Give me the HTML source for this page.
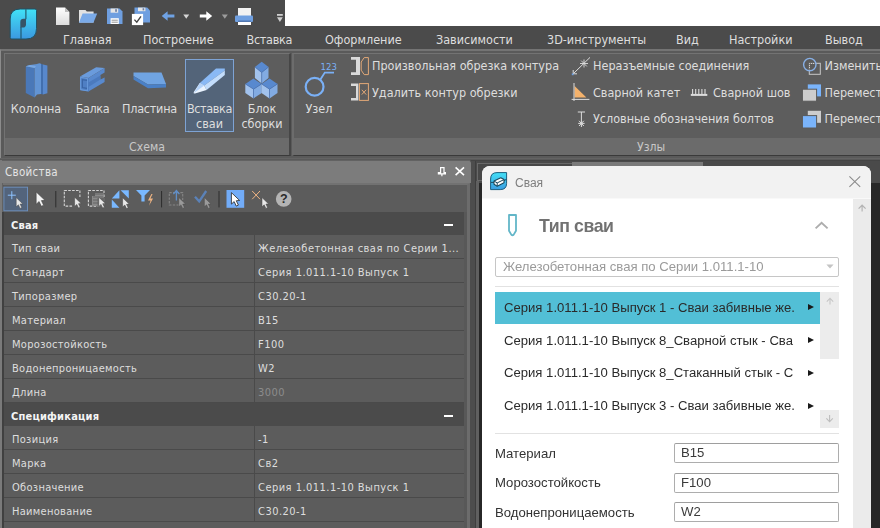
<!DOCTYPE html>
<html lang="ru"><head><meta charset="utf-8"><title>Свая</title>
<style>
*{box-sizing:border-box;margin:0;padding:0}
html,body{width:880px;height:528px;overflow:hidden;background:#4b4b4b}
body{position:relative;font-family:"Liberation Sans","DejaVu Sans",sans-serif}
.abs,svg.i{position:absolute}
svg.i{overflow:visible}
#qat{left:0;top:0;width:285px;height:26px;background:#4b4b4b}
#white{left:285px;top:0;width:595px;height:26px;background:#fff}
#tabs{left:0;top:26px;width:880px;height:24px;background:#4b4b4b}
.tab{position:absolute;top:6px;font:12.5px/16px "DejaVu Sans Condensed","DejaVu Sans",sans-serif;color:#dedede;white-space:nowrap}
#ribbon{left:0;top:49px;width:880px;height:112px;background:#5a5a5a;border-top:2px solid #747474;border-left:1px solid #8c8c8c}
.panel{position:absolute;top:53px;height:103px;background:#5d5d5d;border-top:1px solid #737373;border-bottom:1px solid #3a3a3a}
.ptitle{position:absolute;left:0;right:0;bottom:0;height:17px;background:#6b6b6b;color:#c8c8c8;text-align:center;font:12.2px/18.6px "DejaVu Sans Condensed","DejaVu Sans",sans-serif}
.rt{position:absolute;font:12.5px/16px "DejaVu Sans Condensed","DejaVu Sans",sans-serif;color:#dedede;white-space:nowrap}
.big{margin-top:1px;position:absolute;text-align:center;font:12.5px/15px "DejaVu Sans Condensed","DejaVu Sans",sans-serif;color:#dedede;white-space:nowrap}
#props{left:0;top:160px;width:470px;height:368px;background:#626262;border-left:2px solid #7a7a7a}
#pinner{left:3px;top:183px;width:467px;height:345px;background:#585858;border-top:2px solid #727272;border-right:3px solid #6c6c6c}
#ptitle{left:0;top:161px;width:471px;height:22px;background:#7c7c7c;color:#e4e4e4;font:11.5px/23px "DejaVu Sans Condensed","DejaVu Sans",sans-serif;letter-spacing:.3px;padding-left:5px;border-radius:0 2px 0 0}
.row{position:absolute;left:4px;width:460px;height:24px;background:#5c5c5c;border-bottom:1px solid #4a4a4a;font:11px/22px "DejaVu Sans Condensed","DejaVu Sans",sans-serif;letter-spacing:.3px;color:#dedede}
.row .k{position:absolute;left:8px;top:2.6px;white-space:nowrap}
.row .v{position:absolute;left:254px;top:2.6px;white-space:nowrap;letter-spacing:.47px}
.row.h{height:23px;background:#4b4b4b;font-weight:bold;color:#f4f4f4;border-bottom:none;letter-spacing:.2px}.row.h .k{top:3px;left:7px}
.row.h i{position:absolute;left:440px;top:11.5px;width:9px;height:2px;background:#fff}
.row .vd{position:absolute;left:250px;top:0;width:1px;height:24px;background:#4a4a4a}
#dlg{left:482px;top:166px;width:389px;height:380px;background:#fff;border-radius:8px 8px 0 0;overflow:hidden;will-change:transform}
#dtitle{left:0;top:0;width:390px;height:33px;background:#f2f2f2;border-bottom:1px solid #f9f9f9}
#dscroll{left:370.5px;top:33px;width:20px;height:340px;background:#ebebeb}
.dt{position:absolute;font-family:"Liberation Sans",sans-serif;white-space:nowrap}
.inp{position:absolute;height:20px;border:1px solid #adadad;border-top-color:#9e9e9e;border-radius:2px;background:#fff;font:13.15px/17.4px "Liberation Sans",sans-serif;color:#3a3a3a;padding-left:6px;white-space:nowrap}
.li{position:absolute;left:13px;width:325px;height:32px;font:13.12px/32px "Liberation Sans",sans-serif;color:#2a2a2a;padding-left:9px;white-space:nowrap}
.li b{position:absolute;left:312.6px;top:12.5px;width:0;height:0;border-left:6.6px solid #1a1a1a;border-top:3.6px solid transparent;border-bottom:3.6px solid transparent}
</style></head><body>
<div id="qat" class="abs"></div>
<div id="white" class="abs"></div>
<div id="tabs" class="abs">
<span class="tab" style="left:63px">Главная</span>
<span class="tab" style="left:143px">Построение</span>
<span class="tab" style="left:246.5px;letter-spacing:-.3px">Вставка</span>
<span class="tab" style="left:325px">Оформление</span>
<span class="tab" style="left:436px">Зависимости</span>
<span class="tab" style="left:547px">3D-инструменты</span>
<span class="tab" style="left:676px">Вид</span>
<span class="tab" style="left:729px">Настройки</span>
<span class="tab" style="left:825px">Вывод</span>
</div>
<div id="ribbon" class="abs"></div><div class="abs" style="left:0;top:158px;width:880px;height:3px;background:linear-gradient(#686868,#4a4a4a)"></div>
<div class="panel" style="left:4px;width:287px;border-left:1px solid #737373;border-right:2px solid #464646"><div class="ptitle">Схема</div></div>
<div class="panel" style="left:292px;width:600px;border-left:2px solid #6c6c6c"><div class="ptitle" style="text-align:left;padding-left:343px">Узлы</div></div>
<div class="abs" style="left:185px;top:59px;width:49px;height:73px;background:#536479;border:1px solid #7ea3d4"></div>
<div class="big" style="left:6px;top:100px;width:60px">Колонна</div>
<div class="big" style="left:66.5px;top:100px;width:52px;letter-spacing:-.4px">Балка</div>
<div class="big" style="left:117.5px;top:100px;width:64px;letter-spacing:-.25px">Пластина</div>
<div class="big" style="left:185px;top:100px;width:49px"><span style="letter-spacing:-.35px">Вставка</span><br>сваи</div>
<div class="big" style="left:236px;top:100px;width:52px">Блок<br>сборки</div>
<div class="big" style="left:297px;top:100px;width:44px">Узел</div>
<span class="rt" style="left:372px;top:58px">Произвольная обрезка контура</span>
<span class="rt" style="left:372px;top:84.6px">Удалить контур обрезки</span>
<span class="rt" style="left:593px;top:58px">Неразъемные соединения</span>
<span class="rt" style="left:593px;top:84.6px">Сварной катет</span>
<span class="rt" style="left:713px;top:84.6px">Сварной шов</span>
<span class="rt" style="left:593px;top:111px">Условные обозначения болтов</span>
<span class="rt" style="left:824.5px;top:58px">Изменить</span>
<span class="rt" style="left:824.5px;top:84.6px">Переместить</span>
<span class="rt" style="left:824.5px;top:111px">Переместить</span>
<!--ICONS_START--><svg class="i" style="left:0;top:0" width="880" height="160" viewBox="0 0 880 160">
<defs>
<linearGradient id="lg" x1="0" y1="0" x2="0" y2="1"><stop offset="0" stop-color="#41e2f7"/><stop offset="1" stop-color="#3b98e0"/></linearGradient>
<linearGradient id="pg" x1="0" y1="0" x2="0" y2="1"><stop offset="0" stop-color="#ffffff"/><stop offset="1" stop-color="#dcdcdc"/></linearGradient>
</defs>
<!-- logo -->
<path d="M10.2,37.6 V19 Q10.2,9 20.2,9 H35 Q36.5,9 36.5,10.5 V28.5 Q36.5,39 26,39 H11.7 Q10.2,39 10.2,37.6 Z" fill="url(#lg)" stroke="#1f5266" stroke-width="1"/>
<path d="M25.9,9.2 V19.2 M21,27 V38.8" stroke="#1f5266" stroke-width="1.1" fill="none"/>
<path d="M26,18.8 H23.6 Q20.3,18.8 20.3,22 V27.5 H22.8 Q26,27.5 26,24.4 Z" fill="#365468"/>
<!-- new doc -->
<path d="M56,7.4 H65 L69.4,12 V25 H56 Z" fill="url(#pg)"/>
<path d="M65,7.4 V12 H69.4 Z" fill="#bdbdbd"/>
<!-- folder -->
<path d="M79,10 H85.5 L86.8,11.5 H93.6 V22.5 H79 Z" fill="#e2e2e2"/>
<path d="M82.6,13.6 H97.2 L93.4,22.7 H78.9 Z" fill="#7aaae8"/>
<!-- save -->
<path d="M107,8.5 H119.6 L122.5,11.4 V24 H107 Z" fill="#6f9fe0"/>
<rect x="110.6" y="8.5" width="7.6" height="4.2" fill="#e6e6e6"/><rect x="115.2" y="9.2" width="1.7" height="2.6" fill="#6b7fa5"/>
<rect x="110.6" y="18.2" width="8.2" height="5.8" fill="#fff"/><path d="M111.6,20.2 H117.8 M111.6,22.2 H117.8" stroke="#8a8a8a" stroke-width=".9"/>
<!-- save as -->
<path d="M134.5,7.6 H147.2 L150,10.4 V22.6 H134.5 Z" fill="#6f9fe0"/>
<rect x="138" y="7.6" width="7.4" height="3.6" fill="#e6e6e6"/><rect x="142.6" y="8.2" width="1.6" height="2.2" fill="#6b7fa5"/>
<rect x="131.9" y="13.9" width="11.2" height="11.2" fill="#fff"/>
<path d="M134.4,19.6 L136.8,22.2 L141,16.4" stroke="#444" stroke-width="1.4" fill="none"/>
<!-- arrows -->
<path d="M161.7,16 L167.6,11.2 V14.4 H174.4 V17.6 H167.6 V20.8 Z" fill="#6fa2e4"/>
<path d="M183.3,14.4 H189.2 L186.25,18.7 Z" fill="#d6d6d6"/>
<path d="M212.2,16 L206.3,11.2 V14.4 H199.8 V17.6 H206.3 V20.8 Z" fill="#ffffff"/>
<path d="M221.8,14.4 H227.8 L224.8,18.7 Z" fill="#9c9c9c"/>
<!-- printer -->
<rect x="238" y="8" width="13" height="8" fill="#f2f2f2"/>
<rect x="235" y="15.5" width="18" height="6.6" rx="1" fill="#6f9fe0"/>
<rect x="238" y="21.9" width="13" height="3.1" fill="#fff"/>
<path d="M238,21.2 H251" stroke="#3f639c" stroke-width="1"/>
<!-- customize -->
<rect x="277" y="14" width="5.8" height="1.8" fill="#cfcfcf"/>
<path d="M277,17.3 H282.8 L279.9,21.9 Z" fill="#cfcfcf"/>

<!-- column -->
<path d="M25.8,66.2 L34.6,68 V97.4 L25.8,93 Z" fill="#4a78b8"/>
<path d="M34.6,68 L25.8,66.2 L30,65 L37,64 L39.4,63.2 L41,63.8 V94 L37,94.6 L34.6,97.4 Z" fill="#6294d4"/>
<path d="M25.8,66.2 L30,65 L36,66 L34.6,68 Z" fill="#78a8e4"/>
<path d="M41,63.8 L43,64.4 V94.6 L41,94 Z" fill="#426fae"/>
<path d="M43,64.4 L47.4,65.6 V93.2 L43,94.6 Z" fill="#5888cc"/>
<!-- beam -->
<path d="M80,76.4 L96.2,67.2 L104.6,68 L88.4,78 Z" fill="#6a9bdc"/>
<path d="M80,76.4 L88.4,78 L104.6,68 V72.6 L100.4,75 V79.6 L104.6,77.4 V82 L88.4,91.6 L80,90.2 Z" fill="#5889ce"/>
<path d="M88.4,82.4 L100.4,75.4 V79.6 L88.4,87 Z" fill="#4b7abe"/><path d="M88.4,78 V91.6" stroke="#4a79bc" stroke-width=".8"/>
<path d="M80.7,77.3 L87.6,78.6 V90.8 L80.7,89.6 Z" fill="#4f7fc4" stroke="#6e9fde" stroke-width=".8"/>
<path d="M87,80.4 L82.4,79.6 V87.6 L87,88.4" fill="none" stroke="#3a65a6" stroke-width="1.2"/>
<!-- plate -->
<path d="M133.5,72.6 H161.5 L166,84 L148,84.6 L133.5,76 Z" fill="#70a4e2"/>
<path d="M133.5,76 L148,84.6 L166,84 V87.6 L148,88.2 L133.5,79.6 Z" fill="#4a80c6"/>
<!-- pile -->
<path d="M199.8,83 L216,68.6 H224.8 V70.4 L204.2,85.6 Z" fill="#8ab9f5"/>
<path d="M204.2,85.6 L224.8,70.4 V75 L206.6,90 Z" fill="#c3ddfc"/>
<path d="M199.8,83 L204.2,85.6 L206.6,90 L195,93.6 Q193,93.8 193.8,92 Z" fill="#eaf3fe"/>
<path d="M199.8,83 L204.2,85.6 L194,93 Z" fill="#b4d3fa"/>
<!-- blocks -->
<path d="M261.7,61.7 L268.5,67.1 L261.7,72.5 L254.9,67.1 Z" fill="#5889cf"/><path d="M254.9,67.1 L261.7,72.5 V83.5 L254.9,78.1 Z" fill="#a2c2ec"/><path d="M261.7,72.5 L268.5,67.1 V78.1 L261.7,83.5 Z" fill="#82abe2"/><path d="M254.9,67.1 L261.7,72.5 L268.5,67.1 M261.7,72.5 V83.5" fill="none" stroke="#3f6cb2" stroke-width=".6"/>
<path d="M253.5,78.6 L261.7,83.9 L253.5,89.2 L245.3,83.9 Z" fill="#5889cf"/><path d="M245.3,83.9 L253.5,89.2 V98.4 L245.3,93.1 Z" fill="#a2c2ec"/><path d="M253.5,89.2 L261.7,83.9 V93.1 L253.5,98.4 Z" fill="#82abe2"/><path d="M245.3,83.9 L253.5,89.2 L261.7,83.9 M253.5,89.2 V98.4" fill="none" stroke="#3f6cb2" stroke-width=".6"/>
<path d="M269.5,78.6 L277.5,83.9 L269.5,89.2 L261.5,83.9 Z" fill="#5889cf"/><path d="M261.5,83.9 L269.5,89.2 V98.4 L261.5,93.1 Z" fill="#a2c2ec"/><path d="M269.5,89.2 L277.5,83.9 V93.1 L269.5,98.4 Z" fill="#82abe2"/><path d="M261.5,83.9 L269.5,89.2 L277.5,83.9 M269.5,89.2 V98.4" fill="none" stroke="#3f6cb2" stroke-width=".6"/>
<!-- node -->
<circle cx="314.6" cy="86.7" r="8.9" fill="none" stroke="#7ab0f6" stroke-width="2.2"/>
<path d="M320.4,79.6 L324.8,72.6 H334" fill="none" stroke="#7ab0f6" stroke-width="1.8"/>
<text x="320.6" y="70.2" font-family="DejaVu Sans Condensed, DejaVu Sans, sans-serif" font-size="9.5" fill="#7ab0f6">123</text>
<!-- trim icons -->
<path d="M351,57 H360 V75 H351 V72.2 H356 V59.8 H351 Z" fill="#dadada"/>
<path d="M361.2,62 L364.2,57.6 H368.4 V74.6 H364.2 L361.2,70.2 Z" fill="none" stroke="#e2a877" stroke-width="1"/>
<path d="M351,83.4 H358.4 V100.6 H351 V98 H356 V86 H351 Z" fill="#dadada"/>
<rect x="359.5" y="83.6" width="8.9" height="16.8" fill="none" stroke="#e2a877" stroke-width="1"/>
<path d="M361.8,89.8 L366.2,94.6 M366.2,89.8 L361.8,94.6" stroke="#e2a877" stroke-width="1"/>
<!-- joints -->
<path d="M573,74 L590,57.4" stroke="#dcdcdc" stroke-width="1"/>
<path d="M573.2,70 V73.8 H577" stroke="#dcdcdc" stroke-width="1" fill="none"/>
<path d="M580,63.5 H588 M584,59.5 V67.5 M581.2,60.6 L586.8,66.4" stroke="#dcdcdc" stroke-width=".9"/>
<rect x="571.8" y="73.4" width="1.8" height="1.8" fill="#6fa2e4"/>
<!-- weld leg -->
<path d="M574.6,86 V97.6 H586.4 Z" fill="#f4b26c"/>
<path d="M574,83 V101 M571.6,99.4 H589.4" stroke="#dcdcdc" stroke-width="1"/>
<!-- bolts -->
<path d="M577.8,112 H585 M581.4,112 V127 M578.2,123.4 H584.6 M579,120.8 L583.8,126 M583.8,120.8 L579,126" stroke="#dcdcdc" stroke-width="1" fill="none"/>
<!-- weld seam comb -->
<rect x="690.8" y="93.9" width="16.5" height="2" fill="#dcdcdc"/>
<path d="M692.6,89 V94 M695.7,89 V94 M698.8,89 V94 M701.9,89 V94 M705,89 V94" stroke="#dcdcdc" stroke-width="1.1"/>
<!-- modify -->
<rect x="809.3" y="63.3" width="11" height="11" fill="none" stroke="#c8c8c8" stroke-width="1"/>
<circle cx="809.8" cy="64.6" r="6.2" fill="#5a5a5a" fill-opacity=".6" stroke="#88b0e6" stroke-width="1.4"/>
<path d="M809.5,68 V63.5 H814" stroke="#d0d0d0" stroke-width="1" stroke-dasharray="1 1" fill="none"/>
<!-- move 1 -->
<rect x="807.8" y="84.4" width="13.2" height="12" fill="#7ab4fb"/>
<rect x="802.4" y="89.2" width="14.2" height="12" fill="#cdcdcd" stroke="#5a5a5a" stroke-width="1"/>
<!-- move 2 -->
<rect x="807.8" y="110.8" width="13.2" height="12" fill="#cdcdcd"/>
<rect x="802.4" y="115.6" width="14.2" height="12.4" fill="#7ab4fb" stroke="#5a5a5a" stroke-width="1"/>
</svg>
<!--ICONS_END-->

<div id="props" class="abs"></div>
<div id="pinner" class="abs"></div>
<div class="abs" style="left:4px;top:185px;width:463px;height:27px;background:#5c5c5c"></div><div class="abs" style="left:2px;top:212px;width:2px;height:316px;background:#404040"></div><div id="ptitle" class="abs">Свойства</div>
<!--PT_START--><svg class="i" style="left:0;top:183px" width="471" height="30" viewBox="0 183 471 30">
<rect x="3.9" y="187.2" width="23.6" height="23.6" fill="#53647c" stroke="#6b8dba" stroke-width="1"/>
<path d="M11.8,191.2 V199.2 M7.8,195.2 H15.8" stroke="#8ec2ff" stroke-width="1"/>
<path d="M0,0 V9.2 L2.2,7.2 L3.9,10.8 L5.6,10 L3.9,6.5 L6.6,6.3 Z" transform="translate(16.2 197.6)" fill="#e8e8e8" stroke="#444" stroke-width=".5"/>
<path d="M0,0 V9.2 L2.2,7.2 L3.9,10.8 L5.6,10 L3.9,6.5 L6.6,6.3 Z" transform="translate(36.2 192) scale(1.32)" fill="#f4f4f4" stroke="#3a3a3a" stroke-width=".4"/>
<path d="M55.8,191 V207.4" stroke="#2d2d2d" stroke-width="1"/>
<rect x="64.3" y="190.5" width="15.6" height="15.6" fill="none" stroke="#d4d4d4" stroke-width="1.1" stroke-dasharray="2.6 1.3"/>
<rect x="73" y="198" width="8" height="10" fill="#5c5c5c"/>
<path d="M0,0 V9.2 L2.2,7.2 L3.9,10.8 L5.6,10 L3.9,6.5 L6.6,6.3 Z" transform="translate(74.6 197.2)" fill="#e8e8e8" stroke="#444" stroke-width=".5"/>
<rect x="88.4" y="190.5" width="15.6" height="15.6" fill="none" stroke="#d4d4d4" stroke-width="1.1" stroke-dasharray="2.6 1.3"/>
<path d="M92,206 V196 H95 V193 H103.6 V206 Z" fill="#8a8a8a"/>
<path d="M93,194 H103 M93,197 H103 M93,200 H103 M93,203 H103" stroke="#5c5c5c" stroke-width=".8"/>
<rect x="97.6" y="198" width="8" height="10" fill="#5c5c5c" fill-opacity=".8"/>
<path d="M0,0 V9.2 L2.2,7.2 L3.9,10.8 L5.6,10 L3.9,6.5 L6.6,6.3 Z" transform="translate(98.8 197.2)" fill="#e8e8e8" stroke="#444" stroke-width=".5"/>
<path d="M111.8,198.4 L119.4,190.2 V198.4 Z M120.6,190.2 H128.8 V198.4 Z M111.8,199.6 L119.4,207.8 H111.8 Z" fill="#79b8ff"/>
<path d="M0,0 V9.2 L2.2,7.2 L3.9,10.8 L5.6,10 L3.9,6.5 L6.6,6.3 Z" transform="translate(122.6 197.8)" fill="#e8e8e8" stroke="#444" stroke-width=".5"/>
<path d="M136,190 H150 L144.6,195.6 V201.4 H141.4 V195.6 Z" fill="#79b8ff"/>
<path d="M151.4,194 L148,200.4 H150.6 L149,205.8 L153,198.6 H150.4 L152.6,194 Z" fill="#eeb483"/>
<path d="M161.6,191 V207.4" stroke="#2d2d2d" stroke-width="1"/>
<rect x="169.3" y="192.6" width="13.4" height="12.4" fill="none" stroke="#858585" stroke-width="1.1" stroke-dasharray="2.4 1.3"/>
<path d="M176.4,200.4 V191 M173.4,194.2 L176.4,190.6 L179.4,194.2" stroke="#5f8ec8" stroke-width="1.3" fill="none"/>
<path d="M0,0 V9.2 L2.2,7.2 L3.9,10.8 L5.6,10 L3.9,6.5 L6.6,6.3 Z" transform="translate(178.8 197.6)" fill="#9a9a9a" stroke="#444" stroke-width=".4"/>
<path d="M195,196.8 L199.2,201.4 L206.2,191" stroke="#5b82b8" stroke-width="2.3" fill="none"/>
<path d="M0,0 V9.2 L2.2,7.2 L3.9,10.8 L5.6,10 L3.9,6.5 L6.6,6.3 Z" transform="translate(204.4 197.6)" fill="#9a9a9a" stroke="#444" stroke-width=".4"/>
<path d="M219,191 V207.4" stroke="#2d2d2d" stroke-width="1"/>
<rect x="226.5" y="190" width="17.7" height="17.8" fill="#72acf8"/>
<path d="M0,0 V9.2 L2.2,7.2 L3.9,10.8 L5.6,10 L3.9,6.5 L6.6,6.3 Z" transform="translate(231.4 192.6) scale(1.25)" fill="#ffffff" stroke="#333" stroke-width=".7"/>
<path d="M252.2,191 L260,199.2 M260,191 L252.2,199.2" stroke="#eeb483" stroke-width="1"/>
<path d="M0,0 V9.2 L2.2,7.2 L3.9,10.8 L5.6,10 L3.9,6.5 L6.6,6.3 Z" transform="translate(262 197.6)" fill="#e8e8e8" stroke="#444" stroke-width=".5"/>
<circle cx="283.7" cy="198.9" r="7.8" fill="#b4b4b4"/>
<text x="283.7" y="203.4" text-anchor="middle" font-family="Liberation Sans, sans-serif" font-weight="bold" font-size="12.5" fill="#2a2a2a">?</text>
<!-- title pin & close -->
</svg>
<svg class="i" style="left:430px;top:161px" width="41" height="22" viewBox="430 161 41 22">
<path d="M440.6,167.6 H444 V172.6 H445.4 V173.8 H438.4 V172.6 H440.6 Z M441.9,173.8 V176.2" stroke="#fff" stroke-width="1.2" fill="none"/>
<path d="M455.6,167.4 L464,175.2 M464,167.4 L455.6,175.2" stroke="#fff" stroke-width="1.6"/>
</svg>
<!--PT_END-->
<div class="row h" style="top:212px"><span class="k">Свая</span><i></i></div>
<div class="row" style="top:235px"><span class="k">Тип сваи</span><span class="v">Железобетонная свая по Серии 1...</span><i class="vd"></i></div>
<div class="row" style="top:259px"><span class="k">Стандарт</span><span class="v">Серия 1.011.1-10 Выпуск 1</span><i class="vd"></i></div>
<div class="row" style="top:283px"><span class="k">Типоразмер</span><span class="v">С30.20-1</span><i class="vd"></i></div>
<div class="row" style="top:307px"><span class="k">Материал</span><span class="v">В15</span><i class="vd"></i></div>
<div class="row" style="top:331px"><span class="k">Морозостойкость</span><span class="v">F100</span><i class="vd"></i></div>
<div class="row" style="top:355px"><span class="k">Водонепроницаемость</span><span class="v">W2</span><i class="vd"></i></div>
<div class="row" style="top:379px"><span class="k">Длина</span><span class="v" style="color:#8c8c8c">3000</span><i class="vd"></i></div>
<div class="row h" style="top:403px"><span class="k">Спецификация</span><i></i></div>
<div class="row" style="top:426px"><span class="k">Позиция</span><span class="v">-1</span><i class="vd"></i></div>
<div class="row" style="top:450px"><span class="k">Марка</span><span class="v">Св2</span><i class="vd"></i></div>
<div class="row" style="top:474px"><span class="k">Обозначение</span><span class="v">Серия 1.011.1-10 Выпуск 1</span><i class="vd"></i></div>
<div class="row" style="top:498px"><span class="k">Наименование</span><span class="v">С30.20-1</span><i class="vd"></i></div>
<div class="row" style="top:522px"></div>

<div class="abs" style="left:471px;top:160px;width:409px;height:24px;background:#4a4a4a;border-top:1px solid #444"></div>
<div class="abs" style="left:477px;top:163px;width:95px;height:18px;background:#484848;border:1px solid #696969;border-right:none"></div>
<div class="abs" style="left:572px;top:162px;width:131px;height:22px;background:#7a7a7a"></div>
<div class="abs" style="left:471px;top:183px;width:409px;height:345px;background:#272727"></div>
<div class="abs" style="left:470px;top:183px;width:6px;height:345px;background:#4d4d4d;border-right:1px solid #3e3e3e"></div><div class="abs" style="left:471px;top:161px;width:5px;height:23px;background:#4d4d4d;border-right:1px solid #3e3e3e"></div>
<div class="abs" style="left:476px;top:181px;width:3px;height:347px;background:#606060"></div>
<div id="dlg" class="abs">
 <div id="dtitle" class="abs"></div>
 <div id="dscroll" class="abs"></div>
 <span class="dt" style="left:33px;top:10px;font-size:12px;line-height:15px;color:#7e7e7e">Свая</span>
 <span class="dt" style="left:57px;top:50.3px;font-size:17.7px;letter-spacing:-.4px;line-height:21px;font-weight:bold;color:#727272">Тип сваи</span>
 <div class="inp" style="left:13px;top:91px;width:344px;color:#9a9a9a;font-size:13.15px;padding-left:7px;border-color:#c6c6c6">Железобетонная свая по Серии 1.011.1-10</div>
 <div class="abs" style="left:13px;top:120px;width:344px;height:1px;background:#e2e2e2"></div>
 <div class="abs" style="left:338px;top:126px;width:19px;height:67px;background:#ececec"></div>
 <div class="abs" style="left:338px;top:244px;width:19px;height:18px;background:#ececec"></div>
 <div class="li" style="top:125.6px;height:32.6px;line-height:32.8px;background:#52bfd6"><span>Серия 1.011.1-10 Выпуск 1 - Сваи забивные же.</span><b></b></div>
 <div class="li" style="top:158.7px">Серия 1.011.1-10 Выпуск 8_Сварной стык - Сва<b></b></div>
 <div class="li" style="top:191.4px">Серия 1.011.1-10 Выпуск 8_Стаканный стык - С<b></b></div>
 <div class="li" style="top:224.1px">Серия 1.011.1-10 Выпуск 3 - Сваи забивные же.<b></b></div>
 <div class="abs" style="left:13px;top:267px;width:344px;height:1px;background:#e2e2e2"></div>
 <span class="dt" style="left:13px;top:279.6px;font-size:13.15px;line-height:15px;color:#333">Материал</span>
 <span class="dt" style="left:13px;top:309px;font-size:13.15px;line-height:15px;color:#333">Морозостойкость</span>
 <span class="dt" style="left:13px;top:338.6px;font-size:13.15px;line-height:15px;color:#333">Водонепроницаемость</span>
 <div class="inp" style="left:192px;top:277.4px;width:165px">В15</div>
 <div class="inp" style="left:192px;top:306.8px;width:165px">F100</div>
 <div class="inp" style="left:192px;top:335.6px;width:165px">W2</div>
 <!--DI_START--><svg class="i" style="left:0;top:0" width="390" height="362" viewBox="482 166 390 362">
<defs><linearGradient id="lg2" x1="0" y1="0" x2="0" y2="1"><stop offset="0" stop-color="#43e0f6"/><stop offset="1" stop-color="#3b9ee2"/></linearGradient></defs>
<path d="M490.6,189.6 V179 Q490.6,172.6 497,172.6 H506.6 V183.4 Q506.6,189.6 500.2,189.6 Z" fill="url(#lg2)" stroke="#1c5f80" stroke-width="1"/>
<path d="M494,181 L500.8,177.8 L504,179.6 V182.8 L497.2,186.2 L494,184.2 Z" fill="#fff" stroke="#1b4a60" stroke-width="1.1" stroke-linejoin="round"/>
<path d="M494,181 L497.2,182.9 L504,179.6 M497.2,182.9 V186.2 M491,182.4 H494 M504,180.6 L506.4,179.4" stroke="#1b4a60" stroke-width="1" fill="none"/>
<path d="M849.4,176.4 L860.2,186.8 M860.2,176.4 L849.4,186.8" stroke="#8c8c8c" stroke-width="1.1"/>
<path d="M509,215 H516 V230.8 L513.7,234.6 Q512.5,235.9 511.3,234.6 L509,230.8 Z" fill="none" stroke="#62b6c8" stroke-width="1.8" stroke-linejoin="round"/>
<path d="M815.6,228.4 L821.6,222.8 L827.6,228.4" fill="none" stroke="#adadad" stroke-width="1.9"/>
<path d="M862.1,211.6 V206 M858.6,208.6 L862.1,205.2 L865.6,208.6" fill="none" stroke="#b4b4b4" stroke-width="1.2"/>
<path d="M826.4,264.4 H833.6 L830,268.4 Z" fill="#c4c4c4"/>
<path d="M830,304.6 V299 M826.8,301.6 L830,298.2 L833.2,301.6" fill="none" stroke="#c6c6c6" stroke-width="1.1"/>
<path d="M829.6,415 V421 M826.4,418.4 L829.6,421.8 L832.8,418.4" fill="none" stroke="#bdbdbd" stroke-width="1.1"/>
</svg>
<!--DI_END-->
</div>
</body></html>
